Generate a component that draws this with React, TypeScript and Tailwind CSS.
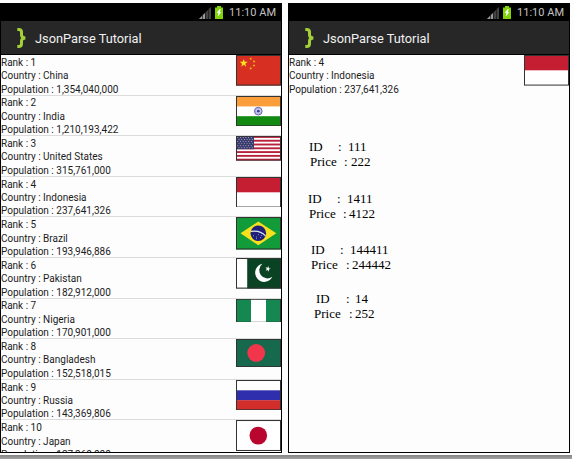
import React from 'react';

const sans = "font-['Roboto','Noto_Sans',sans-serif]";

type FlagName = 'cn' | 'in' | 'us' | 'id' | 'br' | 'pk' | 'ng' | 'bd' | 'ru' | 'jp';

const countries: { rank: number; name: string; pop: string; flag: FlagName; h: number }[] = [
  { rank: 1, name: 'China', pop: '1,354,040,000', flag: 'cn', h: 30.6 },
  { rank: 2, name: 'India', pop: '1,210,193,422', flag: 'in', h: 30.3 },
  { rank: 3, name: 'United States', pop: '315,761,000', flag: 'us', h: 24.6 },
  { rank: 4, name: 'Indonesia', pop: '237,641,326', flag: 'id', h: 30.6 },
  { rank: 5, name: 'Brazil', pop: '193,946,886', flag: 'br', h: 32.5 },
  { rank: 6, name: 'Pakistan', pop: '182,912,000', flag: 'pk', h: 30.6 },
  { rank: 7, name: 'Nigeria', pop: '170,901,000', flag: 'ng', h: 23.6 },
  { rank: 8, name: 'Bangladesh', pop: '152,518,015', flag: 'bd', h: 28 },
  { rank: 9, name: 'Russia', pop: '143,369,806', flag: 'ru', h: 30.3 },
  { rank: 10, name: 'Japan', pop: '127,360,000', flag: 'jp', h: 31 },
];

const star = (cx: number, cy: number, r: number, turn = 0) =>
  Array.from({ length: 10 }, (_, i) => {
    const a = -Math.PI / 2 + turn + (i * Math.PI) / 5;
    const q = i % 2 ? r * 0.4 : r;
    return `${(cx + q * Math.cos(a)).toFixed(2)},${(cy + q * Math.sin(a)).toFixed(2)}`;
  }).join(' ');

function art(name: FlagName) {
  switch (name) {
    case 'cn':
      return (
        <>
          <rect width="45" height="30" fill="#d72f22" />
          <polygon points={star(7.7, 8, 4.2)} fill="#ffe51e" />
          <g fill="#f8c81e">
            <polygon points={star(14.7, 3.7, 1.5, 0.4)} />
            <polygon points={star(18, 6.3, 1.5, 0.2)} />
            <polygon points={star(18, 10.3, 1.5)} />
            <polygon points={star(14.7, 13.2, 1.5, 0.4)} />
          </g>
        </>
      );
    case 'in':
      return (
        <>
          <rect width="45" height="30" fill="#fff" />
          <rect width="45" height="10.3" fill="#fb9d3b" />
          <rect y="20" width="45" height="10" fill="#128a12" />
          <circle cx="22.3" cy="15" r="3.8" fill="#d9d9f4" stroke="#5353ae" strokeWidth=".9" />
          <circle cx="22.3" cy="15" r="2.8" fill="none" stroke="#8888cc" strokeWidth="1" strokeDasharray=".6 .7" />
          <circle cx="22.3" cy="15" r="1.4" fill="#3c3ca0" />
        </>
      );
    case 'us':
      return (
        <>
          <rect width="45" height="30" fill="#fff" />
          {[0, 2, 4, 6, 8, 10, 12].map((i) => (
            <rect key={i} y={(i * 30) / 13} width="45" height={30 / 13} fill="#b9203b" />
          ))}
          <rect width="18" height="16.15" fill="#3c3b6e" />
          {[0, 1, 2, 3, 4, 5].map((r) =>
            [0, 1, 2, 3, 4, 5].map((c) => (
              <circle key={`${r}-${c}`} cx={1.8 + c * 2.7 + (r % 2) * 1.2} cy={1.8 + r * 2.5} r=".6" fill="#c9c9df" />
            )),
          )}
        </>
      );
    case 'id':
      return (
        <>
          <rect width="45" height="30" fill="#fff" />
          <rect width="45" height="15" fill="#c51d32" />
        </>
      );
    case 'br':
      return (
        <>
          <rect width="45" height="30" fill="#119b39" />
          <path d="M4.5 15 22.3 4.2 40.3 15 22.3 26Z" fill="#f8e01d" />
          <ellipse cx="22.3" cy="15" rx="7.8" ry="7.2" fill="#20207b" />
          <path d="M14.8 13.3Q24 11.8 29.4 17.4" fill="none" stroke="#dceaf0" strokeWidth="1.2" />
          <path d="M17 17.3h1M20 18.5h1M24 19h1M22 16.3h1M25 17.2h1M20 20h1" stroke="#aab5e0" strokeWidth=".7" />
        </>
      );
    case 'pk':
      return (
        <>
          <rect width="45" height="30" fill="#0a4324" />
          <rect width="11.2" height="30" fill="#fff" />
          <path d="M26.4 5.6A9 9 0 1 0 36.3 18.3A7.8 7.8 0 1 1 26.4 5.6Z" fill="#fff" />
          <polygon points={star(31.9, 10.7, 2.9, 0.25)} fill="#fff" />
        </>
      );
    case 'ng':
      return (
        <>
          <rect width="45" height="30" fill="#158751" />
          <rect x="15" width="15" height="30" fill="#fff" />
        </>
      );
    case 'bd':
      return (
        <>
          <rect width="45" height="30" fill="#17694e" />
          <ellipse cx="20.2" cy="15" rx="8.9" ry="9.6" fill="#f1354a" />
        </>
      );
    case 'ru':
      return (
        <>
          <rect width="45" height="30" fill="#fff" />
          <rect y="10.2" width="45" height="10" fill="#2f2fae" />
          <rect y="20" width="45" height="10" fill="#d12e2c" />
        </>
      );
    case 'jp':
      return (
        <>
          <rect width="45" height="30" fill="#fff" />
          <ellipse cx="22.3" cy="15.1" rx="8.8" ry="8.6" fill="#b9062f" />
        </>
      );
  }
}

function Flag({ name, h }: { name: FlagName; h: number }) {
  return (
    <svg className="block w-[45px] shrink-0" style={{ height: h }} viewBox="0 0 45 30" preserveAspectRatio="none">
      {art(name)}
      <rect x=".5" y=".5" width="44" height="29" fill="none" stroke="#333" strokeWidth="1" />
    </svg>
  );
}

function Header() {
  return (
    <header className={sans}>
      <div className="flex h-[18px] items-center justify-end bg-black pr-[5px] text-[#c4c4c4]">
        <svg className="mt-[2px] mr-[4px] h-[12px] w-[12px]" viewBox="0 0 12 12">
          <path d="M0 12 12 0V12Z" fill="#444" />
          <path d="M0 12 6 6V12Z" fill="#999" />
          <path d="M3.5 7V12M6.5 4V12M9.5 1V12" stroke="#161616" strokeWidth=".7" />
        </svg>
        <svg className="mr-[6px] h-[13px] w-[8px]" viewBox="0 0 8 13">
          <path d="M2 0H6V1.5H8V13H0V1.5H2Z" fill="#82d20a" />
          <path d="M4.6 3.2 1.6 6.7H3.5L2.7 10.5 6.4 6.2H4.4L6 3.2Z" fill="#fff" />
        </svg>
        <span className="pt-[2px] text-[11px] leading-[18px]">11:10 AM</span>
      </div>
      <div className="flex h-[33px] items-center bg-[#272727] pl-[16px]">
        <svg className="mt-[1px] h-[20px] w-[9px]" viewBox="0 0 9 20">
          <path
            d="M.3 1.6H1.6Q4.5 1.6 4.5 4V7Q4.5 9.7 8.3 10Q4.5 10.3 4.5 13V16Q4.5 18.4 1.6 18.4H.3"
            fill="none"
            stroke="#a4cf37"
            strokeWidth="3"
          />
        </svg>
        <span className="ml-[9px] pt-[2px] text-[12.8px] leading-[33px] text-[#f1f1f1]">JsonParse Tutorial</span>
      </div>
      <div className="h-px bg-black" />
    </header>
  );
}

function Details({ rank, name, pop }: { rank: number; name: string; pop: string }) {
  return (
    <div className={`${sans} whitespace-nowrap pt-[0.9px] text-[10px] leading-[13.4px] text-[#1c1c1c]`}>
      <div>Rank : {rank}</div>
      <div>Country : {name}</div>
      <div>Population : {pop}</div>
    </div>
  );
}

function Entry({ label, value, shift, colon, start }: { label: string; value: string; shift: number; colon: number; start: number }) {
  return (
    <div className="flex h-[15px] whitespace-pre leading-[15px]" style={{ paddingLeft: shift }}>
      <span style={{ width: colon - shift }}>{label}</span>
      <span style={{ width: start - colon }}>:</span>
      <span>{value}</span>
    </div>
  );
}

const items = [
  { id: '111', price: '222', a: [20, 49, 59], b: [21, 55, 62], gap: 'mt-0' },
  { id: '1411', price: '4122', a: [19, 48, 58], b: [20, 54, 60], gap: 'mt-[22px]' },
  { id: '144411', price: '244442', a: [22, 51, 61], b: [22, 57, 63], gap: 'mt-[21px]' },
  { id: '14', price: '252', a: [27, 57, 66], b: [25, 60, 66], gap: 'mt-[19px]' },
];

export default function App() {
  return (
    <main className="flex h-[459px] w-[574px] flex-col overflow-hidden bg-[#fdfdfd] pt-[3px]">
      <div className="flex h-[450px] gap-[6px]">
        <section className="flex w-[282px] flex-col overflow-hidden border-x border-b border-black">
          <Header />
          <div className="min-h-0 flex-1 overflow-hidden">
            {countries.map((c) => (
              <div key={c.rank} className="flex h-[40.6px] items-start justify-between border-b border-[#dcdcdc]">
                <Details rank={c.rank} name={c.name} pop={c.pop} />
                <Flag name={c.flag} h={c.h} />
              </div>
            ))}
          </div>
        </section>
        <section className="flex w-[282px] flex-col border-x border-b border-black">
          <Header />
          <div className="flex items-start justify-between">
            <Details rank={4} name="Indonesia" pop="237,641,326" />
            <Flag name="id" h={30.6} />
          </div>
          <div className="mt-[43.1px] font-['Liberation_Serif',serif] text-[13px] text-black">
            {items.map((it) => (
              <div key={it.id} className={it.gap}>
                <Entry label="ID" value={it.id} shift={it.a[0]} colon={it.a[1]} start={it.a[2]} />
                <Entry label="Price" value={it.price} shift={it.b[0]} colon={it.b[1]} start={it.b[2]} />
              </div>
            ))}
          </div>
        </section>
      </div>
      <div className="mt-[2px] mr-[2px] h-[4px] bg-linear-to-b from-[#858585] to-[#a2a2a2]" />
    </main>
  );
}
